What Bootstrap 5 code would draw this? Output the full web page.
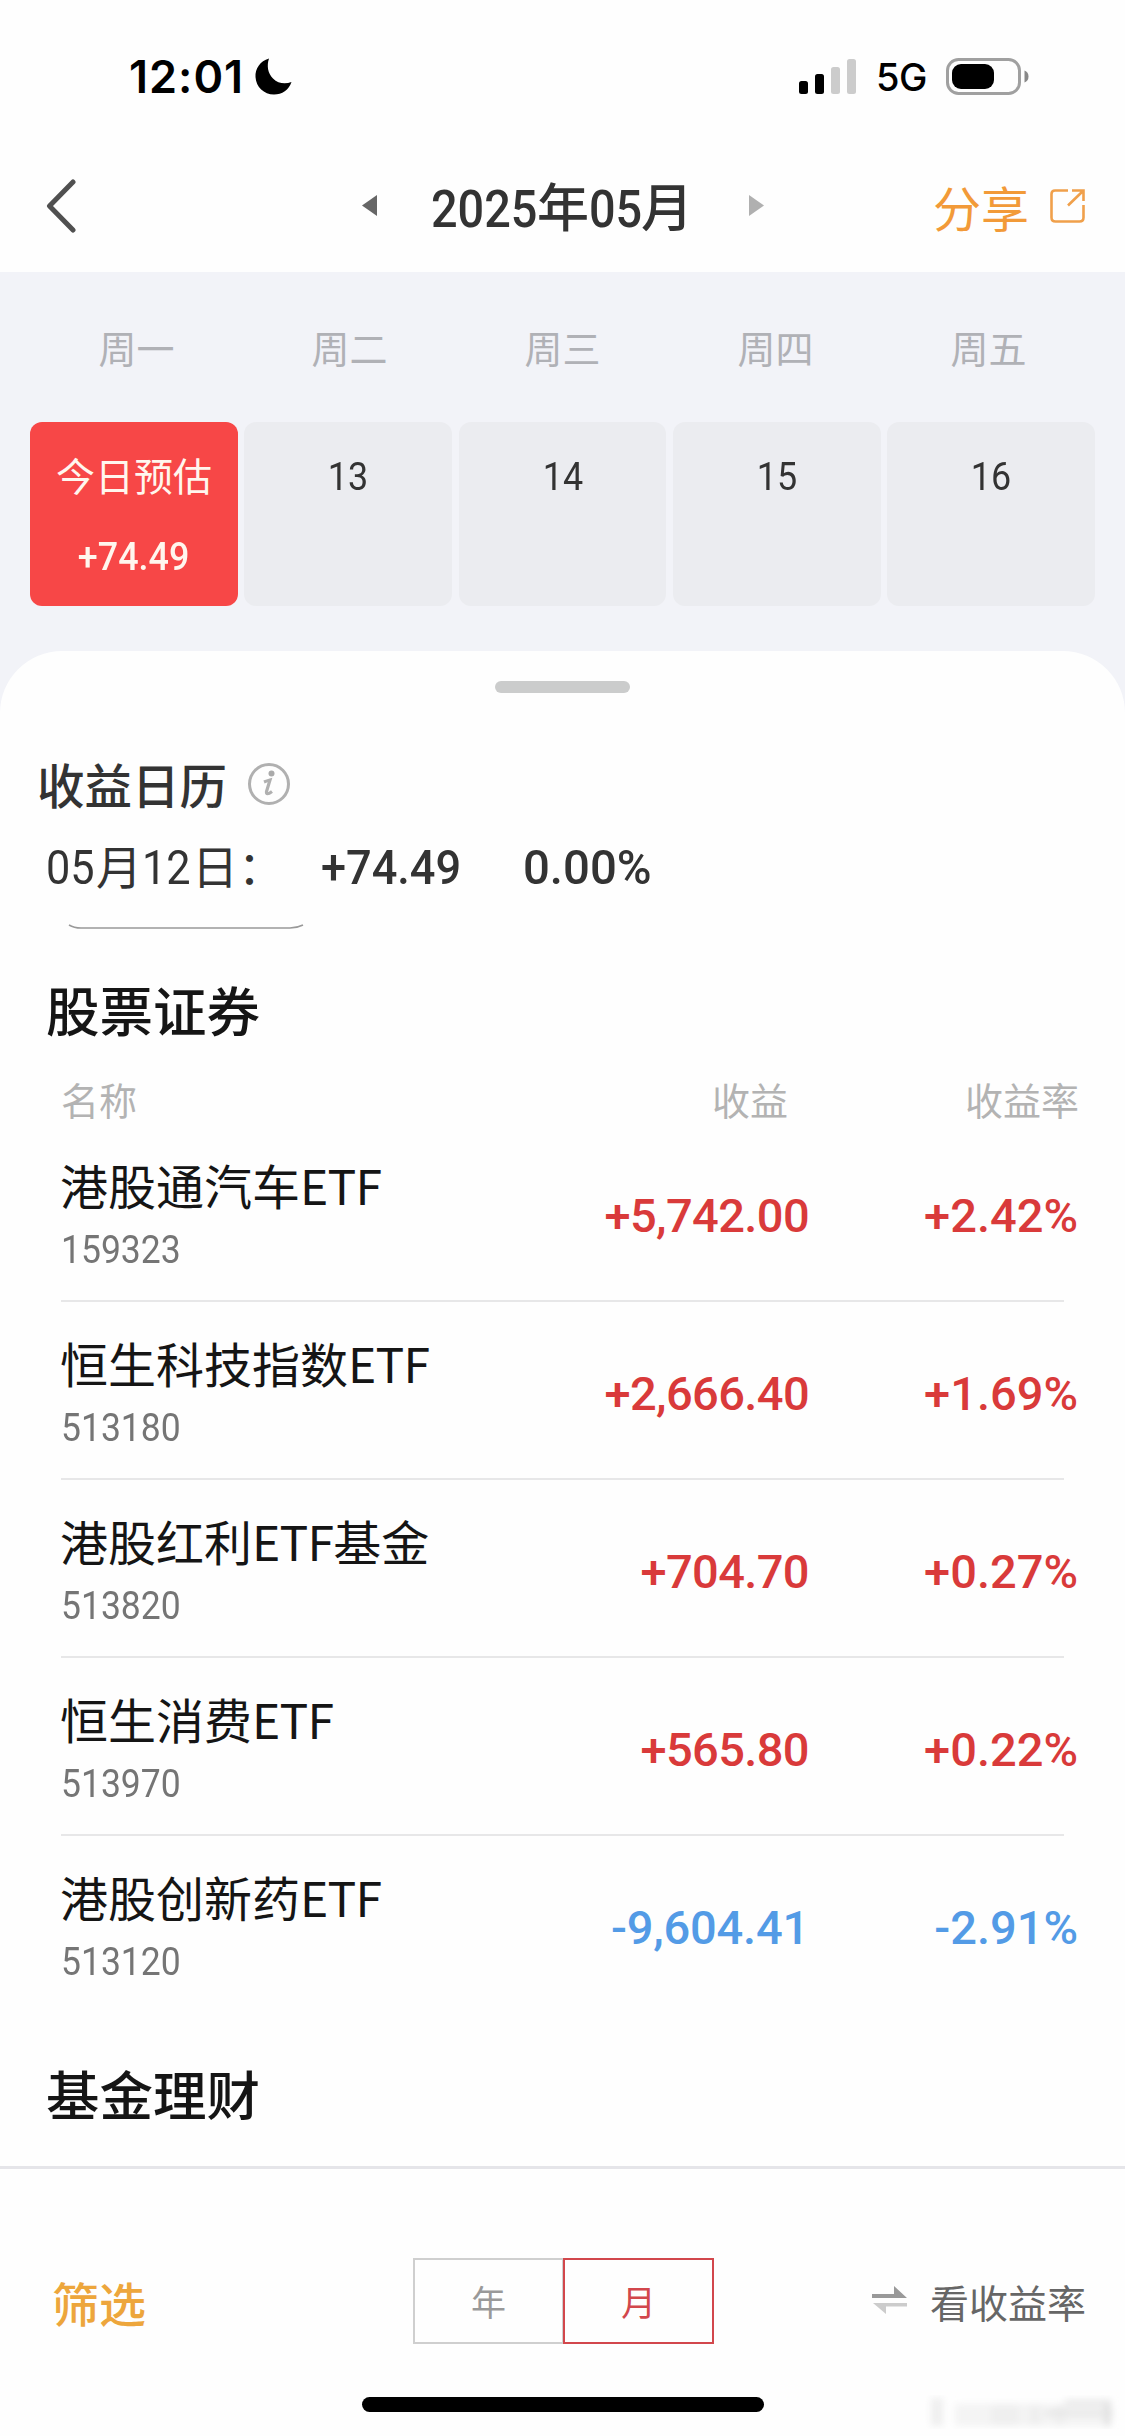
<!DOCTYPE html>
<html lang="zh-CN">
<head>
<meta charset="utf-8">
<meta name="viewport" content="width=device-width, initial-scale=1">
<title>收益日历</title>
<link href="https://cdn.jsdelivr.net/npm/bootstrap@5.3.0/dist/css/bootstrap.min.css" rel="stylesheet">
<style>
body{width:1125px;height:2436px;overflow:hidden;background:#fefefe;color:#191919;font-family:Roboto,"Noto Sans CJK SC",sans-serif;line-height:1}
svg{display:block;flex:none}
.cjk{font-family:"Noto Sans CJK SC",sans-serif}
.fw-med{font-weight:500}
/* narrow numerals */
.sq{display:inline-block;white-space:nowrap;transform:scaleX(.92)}
.sq-l{transform-origin:left}
.statusbar{height:140px;padding:13px 95px 0 129px;font-family:Inter,sans-serif;color:#000}
.clock{font-size:45px;font-weight:600;width:126px;letter-spacing:1px;white-space:nowrap}
.bars{margin-right:19px}
.net{font-size:38px;font-weight:500;width:70px;letter-spacing:-.5px}
.topnav{height:132px;padding:0 38px 0 45px}
.prev{margin-left:285px}
.title{font-size:52px;font-weight:500;color:#333;width:260px;margin:7px 58px 0 53px;white-space:nowrap}
.title .sq{transform:scaleX(.9)}
.y4{width:106px}
.m2{width:52px}
.share{color:#f29a38;font-size:48px;gap:20px}
.calendar{background:#f2f3f8;height:440px}
.weekdays{padding:0 30px;height:150px;color:#b0b1b6;font-size:38px}
.days{padding:0 30px;gap:6.5px}
.day{height:184px;border-radius:12px;background:#ebecf0;color:#333;font-size:39px;padding-top:15px}
.day>div{height:80px}
.today{background:#f74747;color:#fff6ee}
.today .cjk{height:74px;margin-bottom:6px}
.sheet{margin-top:-61px;height:1515px;border-radius:62px 62px 0 0;background:#fefefe;padding-top:30px}
.handle{width:135px;height:12px;border-radius:6px;background:#cbcccc}
.caltitle{font-size:47.5px;font-weight:500;color:#333;height:76px;padding-left:37px;gap:20px;margin-top:53px}
.dateline{height:84px;padding:4px 0 0 46px;color:#333;font-size:48px}
.datelabel{width:275px;white-space:nowrap}
.datelabel .cjk{font-size:46px}
.d05{width:50px;transform:scaleX(.9)}
.gain{width:202px}
.dateline .fw-med{padding-top:3px}
.dateline .fw-med .sq{transform:scaleX(.94)}
.dateline .fw-med .rate0{transform:scaleX(.985)}
.tabline{margin:18px 0 0 68px}
.sect{font-size:53.5px;font-weight:500;color:#151515;padding-left:46px;height:80px;padding-bottom:6px}
.sect-a{margin-top:40px}
.sect-b{margin-top:40px;padding-bottom:2px}
.labels{height:44px;margin:25px 0 3px;padding:0 46px 0 61px;font-size:38px;color:#b3b3b3}
.lab-gain{width:253px}
.fund{height:178px;margin:0 61px;border-bottom:2px solid #e7e7e8}
.fund:last-child{border-color:transparent}
.fname{font-size:48px;height:62px;margin:10px 0 4px -1px;color:#151515;white-space:nowrap}
.fname i{font-style:normal;letter-spacing:-.8px}
.fcode{font-size:39px;height:62px;color:#757575}
.fcode .sq{transform:scaleX(.91)}
.amt{font-size:47px;font-weight:500;color:#d93a3a;white-space:nowrap;padding-top:6px;letter-spacing:-.6px}
.amt.down{color:#539be6;letter-spacing:-.2px}
.amt.pct{width:269px;margin-right:-14px;letter-spacing:0}
.footer-bar{height:270px;border-top:3px solid #e5e5e9}
.footrow{height:86px;margin-top:89px;padding:0 39px 0 52px}
.filter{width:361px;font-size:47px;font-weight:500;color:#eda63c}
.seg{width:151px;height:86px;border:2px solid #cfcfcf;color:#999;font-size:35px;padding-bottom:2px}
.seg.on{border-color:#d2474c;color:#d2474c;margin-left:-1px}
.see{font-size:39px;color:#666;gap:21px}
.homebar{width:402px;height:15px;border-radius:8px;background:#000;margin:53px 0 0 362px}
.stamp{position:absolute;right:0;bottom:0}
</style>
<script src="https://cdn.jsdelivr.net/npm/bootstrap@5.3.0/dist/js/bootstrap.bundle.min.js"></script>
</head>
<body>
<div class="statusbar d-flex align-items-center">
  <div class="clock">12:01</div>
  <svg width="37" height="37" viewBox="0 0 37 37"><path d="M14 .5C5 3 0 11 .5 19C1 29 9 36.500 19 36.500C27 36.500 34 32 36.500 24C30 26.500 23 25.500 18 20.500C13 15.500 11.500 8 14 .5Z"/></svg>
  <div class="flex-grow-1"></div>
  <svg class="bars" width="58" height="36"><rect x="0" y="22" width="9" height="13" rx="2.5"/><rect x="16" y="15" width="9" height="20" rx="2.5"/><rect x="32" y="8" width="9" height="27" rx="2.5" fill="#ccc"/><rect x="48" y="0" width="9" height="35" rx="2.5" fill="#ccc"/></svg>
  <div class="net">5G</div>
  <svg width="84" height="38"><rect x="1.500" y="1.500" width="72" height="34" rx="11" fill="none" stroke="#a0a0a0" stroke-width="3"/><rect x="6" y="6" width="42" height="25" rx="9"/><path d="M78.500 12.500Q82.500 14 82.500 18.500T78.500 24.500Z" fill="#888"/></svg>
</div>
<div class="topnav d-flex align-items-center">
  <svg width="32" height="54"><path d="M28 3L4.500 27L28 51" fill="none" stroke="#505050" stroke-width="5" stroke-linecap="round" stroke-linejoin="round"/></svg>
  <svg class="prev" width="16" height="22"><path d="M15 0V21L0 10.500Z" fill="#666"/></svg>
  <div class="title"><span class="sq sq-l y4">2025</span>年<span class="sq sq-l m2">05</span>月</div>
  <svg width="16" height="22"><path d="M0 0V21L15 10.500Z" fill="#b0b0b0"/></svg>
  <div class="flex-grow-1"></div>
  <div class="share cjk d-flex align-items-center">分享<svg width="38" height="36" viewBox="0 0 38 36" fill="none" stroke="#f0a04b" stroke-width="2.600"><path d="M19 2.500H6Q2.500 2.500 2.500 6V29.500Q2.500 33.500 6.500 33.500H30.500Q34.500 33.500 34.500 29.500V17M23 2.500H34.500V13M34.500 2.500L19 17.500"/></svg></div>
</div>
<div class="calendar">
  <div class="weekdays d-flex align-items-center text-center cjk"><div class="col">周一</div><div class="col">周二</div><div class="col">周三</div><div class="col">周四</div><div class="col">周五</div></div>
  <div class="days d-flex text-center">
    <div class="day today col"><div class="d-flex align-items-center justify-content-center cjk">今日预估</div><div class="d-flex align-items-center justify-content-center fw-med"><span class="sq">+74.49</span></div></div>
    <div class="day col"><div class="d-flex align-items-center justify-content-center"><span class="sq">13</span></div></div>
    <div class="day col"><div class="d-flex align-items-center justify-content-center"><span class="sq">14</span></div></div>
    <div class="day col"><div class="d-flex align-items-center justify-content-center"><span class="sq">15</span></div></div>
    <div class="day col"><div class="d-flex align-items-center justify-content-center"><span class="sq">16</span></div></div>
  </div>
</div>
<main class="sheet position-relative">
  <div class="handle mx-auto"></div>
  <div class="caltitle d-flex align-items-center cjk">收益日历
    <svg width="44" height="44" viewBox="0 0 44 44" fill="none" stroke="#b0b0b0"><circle cx="22" cy="22" r="19.500" stroke-width="3"/><circle cx="24.500" cy="11.500" r="3" fill="#aaa" stroke="none"/><path d="M17 20Q20 18.800 23 18L19.500 29.500Q19 34 25 29.500" stroke-width="3.200"/></svg>
  </div>
  <div class="dateline d-flex align-items-center">
    <div class="datelabel"><span class="sq sq-l d05">05</span><span class="cjk">月</span><span class="sq sq-l d05">12</span><span class="cjk">日：</span></div>
    <div class="gain fw-med"><span class="sq sq-l">+74.49</span></div>
    <div class="fw-med"><span class="sq sq-l rate0">0.00%</span></div>
  </div>
  <svg class="tabline" width="236" height="8"><path d="M1 1Q6 4 13 4H222Q229 4 235 1" fill="none" stroke="#999" stroke-width="1.600"/></svg>
  <div class="sect sect-a cjk d-flex align-items-center">股票证券</div>
  <div class="labels d-flex align-items-center cjk"><div class="flex-grow-1">名称</div><div class="lab-gain">收益</div><div>收益率</div></div>
  <div class="list">
    <div class="fund d-flex align-items-center"><div class="flex-grow-1"><div class="fname cjk d-flex align-items-center">港股通汽车<i>ETF</i></div><div class="fcode d-flex align-items-center"><span class="sq sq-l">159323</span></div></div><div class="amt text-end">+5,742.00</div><div class="amt pct text-end">+2.42%</div></div>
    <div class="fund d-flex align-items-center"><div class="flex-grow-1"><div class="fname cjk d-flex align-items-center">恒生科技指数<i>ETF</i></div><div class="fcode d-flex align-items-center"><span class="sq sq-l">513180</span></div></div><div class="amt text-end">+2,666.40</div><div class="amt pct text-end">+1.69%</div></div>
    <div class="fund d-flex align-items-center"><div class="flex-grow-1"><div class="fname cjk d-flex align-items-center">港股红利<i>ETF</i>基金</div><div class="fcode d-flex align-items-center"><span class="sq sq-l">513820</span></div></div><div class="amt text-end">+704.70</div><div class="amt pct text-end">+0.27%</div></div>
    <div class="fund d-flex align-items-center"><div class="flex-grow-1"><div class="fname cjk d-flex align-items-center">恒生消费<i>ETF</i></div><div class="fcode d-flex align-items-center"><span class="sq sq-l">513970</span></div></div><div class="amt text-end">+565.80</div><div class="amt pct text-end">+0.22%</div></div>
    <div class="fund d-flex align-items-center"><div class="flex-grow-1"><div class="fname cjk d-flex align-items-center">港股创新药<i>ETF</i></div><div class="fcode d-flex align-items-center"><span class="sq sq-l">513120</span></div></div><div class="amt down text-end">-9,604.41</div><div class="amt down pct text-end">-2.91%</div></div>
  </div>
  <div class="sect sect-b cjk d-flex align-items-center">基金理财</div>
</main>
<footer class="footer-bar position-relative">
  <div class="d-flex flex-column">
  <div class="footrow d-flex align-items-center cjk">
    <div class="filter">筛选</div>
    <div class="seg d-flex align-items-center justify-content-center">年</div>
    <div class="seg on d-flex align-items-center justify-content-center">月</div>
    <div class="flex-grow-1"></div>
    <div class="see d-flex align-items-center"><svg width="37" height="30" viewBox="0 0 37 30"><path d="M0 8H22V0L35 12H0Z" fill="#999"/><path d="M35 17H1L14 28V20.500H35Z" fill="#ccc"/></svg>看收益率</div>
  </div>
  <div class="homebar"></div>
  </div>
  <svg class="stamp" width="200" height="50" aria-hidden="true"><defs><filter id="soft"><feGaussianBlur stdDeviation="3.500"/></filter></defs><g filter="url(#soft)" fill="#efefef"><rect x="6" y="12" width="12" height="28"/><rect x="30" y="18" width="150" height="22" fill="#f4f4f4"/><rect x="66" y="18" width="28" height="22"/><rect x="104" y="18" width="12" height="22"/><rect x="130" y="18" width="10" height="22"/><rect x="140" y="14" width="46" height="5" fill="#e6e6e6"/><rect x="120" y="25" width="68" height="4" fill="#e2e2e2"/><rect x="179" y="15" width="7" height="25" fill="#e2e2e2"/></g></svg>
</footer>
</body>
</html>
